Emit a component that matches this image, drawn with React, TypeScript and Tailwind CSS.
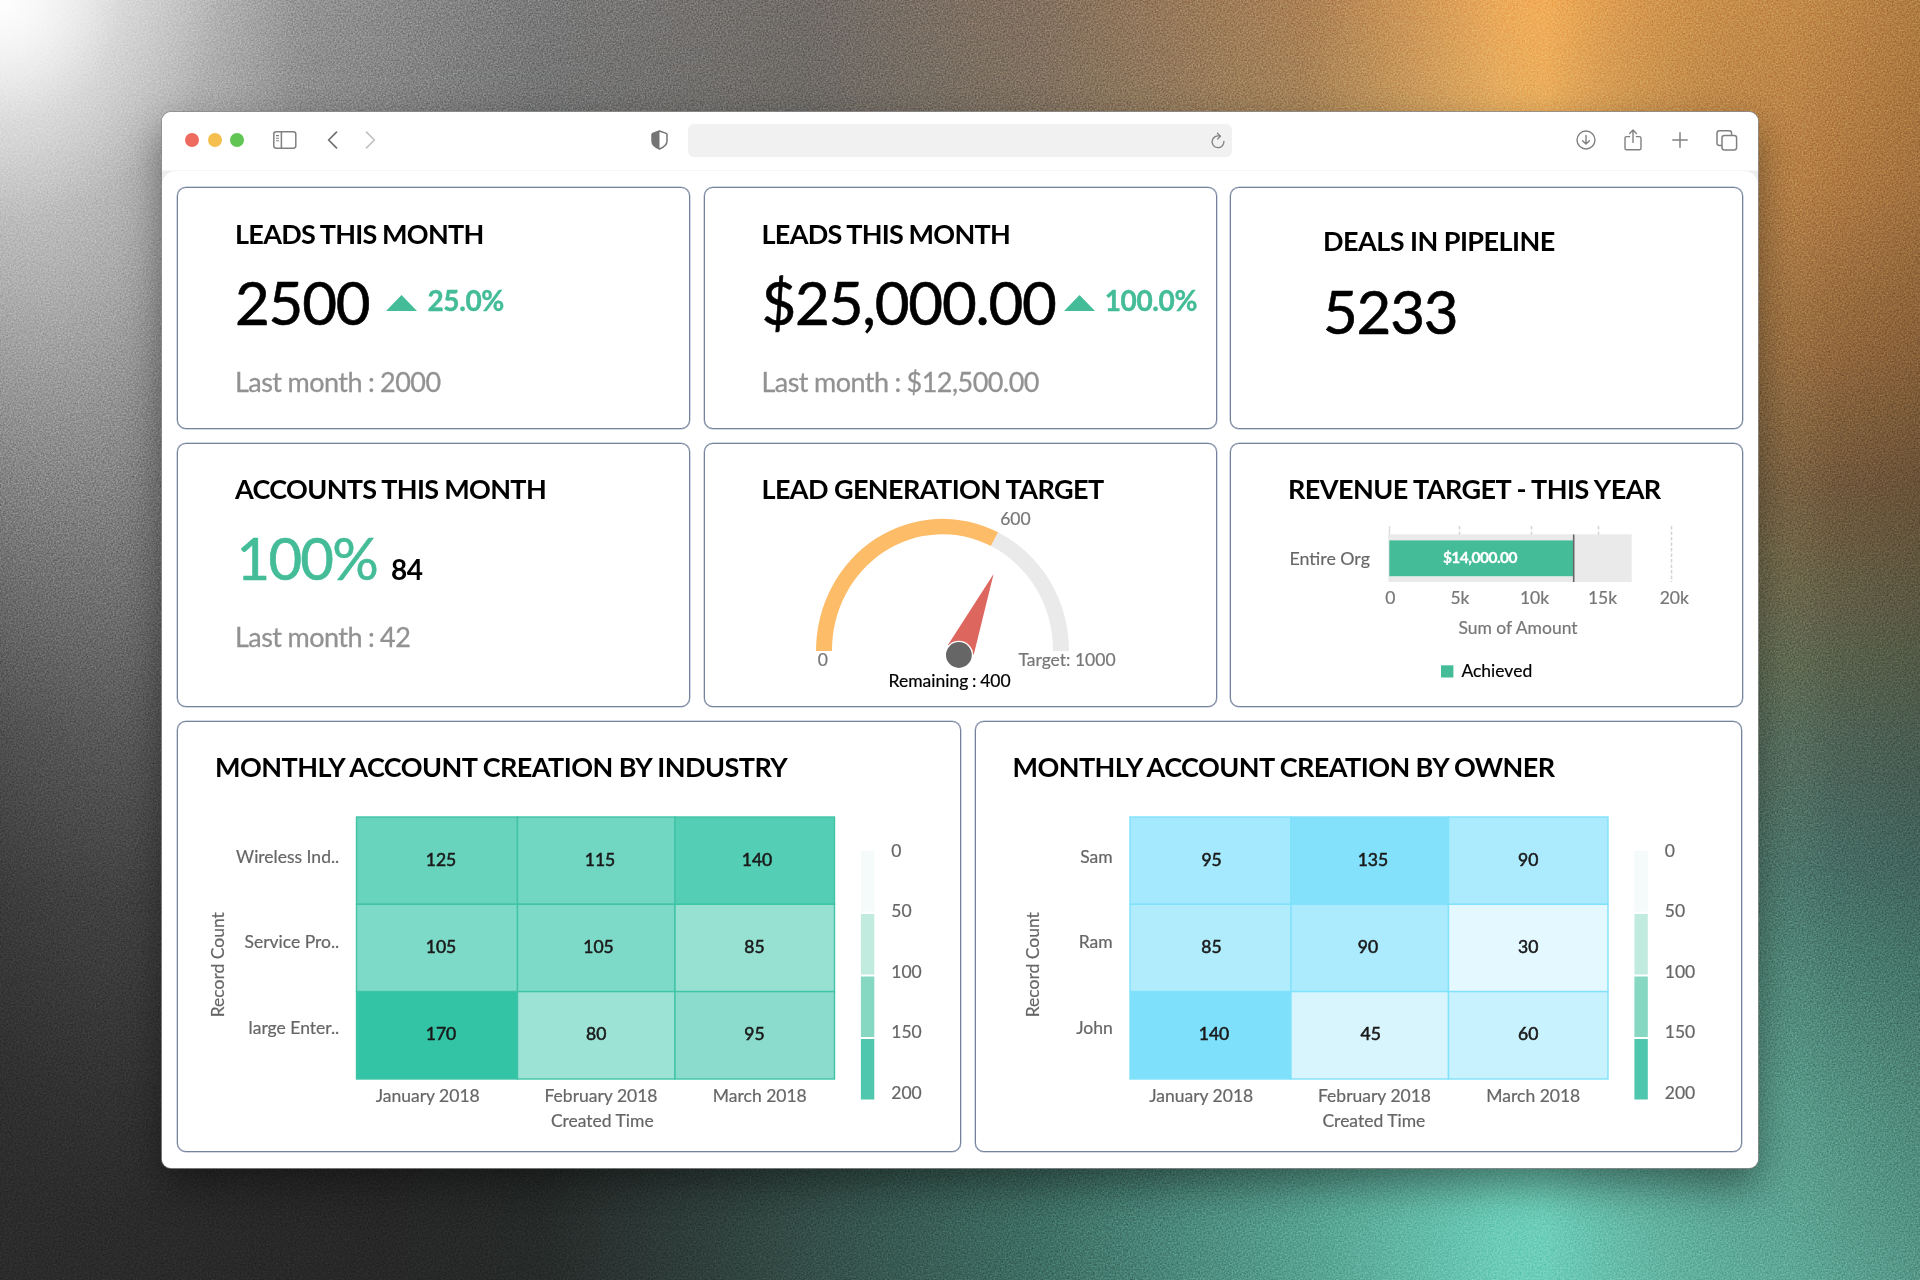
import type {ReactNode} from "react";

interface KpiProps {
    title: string;
    value: string;
    delta?: string;
    lastMonth?: string;
}

interface HeatmapProps {
    rows: string[];
    cells: { value: number; color: string; x: number }[][];
    line: string;
    left: number;
    axisX: number;
    timeX: number;
}

const GREEN = "#43bc97";

// column and row edges, measured from the top left corner of the grid
const COLS = [0, 161, 318.5, 478];
const ROWS = [0, 87.3, 174.6, 262];

const LEGEND = [
    {y: 34, color: "#f5fafa"},
    {y: 97, color: "#c2ebe0"},
    {y: 159.5, color: "#86d8c3"},
    {y: 222, color: "#4fc7ae"},
];

const industryCells = [
    [
        {value: 125, color: "#68d4bd", x: 84.5},
        {value: 115, color: "#72d7c2", x: 243.5},
        {value: 140, color: "#54ceb4", x: 400.5},
    ],
    [
        {value: 105, color: "#7edac8", x: 84.5},
        {value: 105, color: "#7edac8", x: 242},
        {value: 85, color: "#97e1d2", x: 398},
    ],
    [
        {value: 170, color: "#33c4a6", x: 84.5},
        {value: 80, color: "#9de3d5", x: 239.7},
        {value: 95, color: "#8bdccc", x: 398},
    ],
];

const ownerCells = [
    [
        {value: 95, color: "#a5e9fe", x: 81.6},
        {value: 135, color: "#84e1fc", x: 242.9},
        {value: 90, color: "#acebfe", x: 398.2},
    ],
    [
        {value: 85, color: "#b1ecfd", x: 81.4},
        {value: 90, color: "#acebfe", x: 237.9},
        {value: 30, color: "#e4f8ff", x: 398.2},
    ],
    [
        {value: 140, color: "#7fe0fc", x: 84},
        {value: 45, color: "#d8f5fd", x: 240.7},
        {value: 60, color: "#c8f2fe", x: 398.2},
    ],
];

const Card = ({className, children}: { className: string; children: ReactNode }) => (
    <section
        className={`flex flex-col rounded-[9px] border border-[#74829d] bg-white shadow-[0_0_0_0.5px_#a9b2c4] ${className}`}>
        {children}
    </section>
);

const Title = ({children, className = "tracking-[-0.02em]"}: { children: ReactNode; className?: string }) => (
    <h2 className={`text-[27px] leading-8 font-bold whitespace-nowrap text-black ${className}`}>
        {children}
    </h2>
);

const LastMonth = ({children}: { children: ReactNode }) => (
    <p className="mt-[34px] text-[27px] leading-8 tracking-[-0.02em] text-[#929292] [-webkit-text-stroke:0.3px] [word-spacing:-0.4px]">
        {children}
    </p>
);

const Kpi = ({title, value, delta, lastMonth}: KpiProps) => (
    <Card className="pt-[30px] pl-[57px]">
        <Title className="tracking-[-0.026em] [word-spacing:-0.5px]">{title}</Title>
        <div className="mt-[22px] flex h-[60px] whitespace-nowrap">
            <span
                className="text-[60px] leading-[60px] tracking-[-0.02em] text-black [-webkit-text-stroke:0.6px]">{value}</span>
            {delta && (
                <div className={`flex items-start ${value.length > 5 ? "ml-[8px]" : "ml-[17px]"}`}>
                    <svg width="31" height="16" viewBox="0 0 31 16" className="mt-[23px]">
                        <path d="M15.5 0 31 16H0Z" fill={GREEN}/>
                    </svg>
                    <span
                        className="mt-[12px] ml-[10px] text-[28px] leading-8 font-bold tracking-[-0.013em] text-[#43bc97] [-webkit-text-stroke:0.4px]">
                        {delta}
                    </span>
                </div>
            )}
        </div>
        <LastMonth>{lastMonth}</LastMonth>
    </Card>
);

const Gauge = () => (
    <svg width="511" height="200" viewBox="705 502 511 200" fontSize="17.5">
        <path d="M816 651A126.5 132 0 0 1 998.2 532.3L991 546A110.5 116 0 0 0 832 651Z" fill="#fdbc68"/>
        <path d="M998.2 532.3A126.5 132 0 0 1 1069 651H1053A110.5 116 0 0 0 991 546Z" fill="#eaeaea"/>
        <path d="M993.6 574 947.9 645 973.8 654.5Z" fill="#dd665f"/>
        <circle cx="958.9" cy="655" r="13.6" fill="#666" stroke="#fff" strokeWidth="1.4"/>
        <g fill="#777" stroke="#777" strokeWidth="0.2" textAnchor="middle">
            <text x="1015.4" y="524.7">600</text>
            <text x="822.9" y="666.3">0</text>
            <text x="1067" y="666.3">Target: 1000</text>
            <text x="949.6" y="687" fill="#000" stroke="#000" wordSpacing="-0.7">Remaining : 400</text>
        </g>
    </svg>
);

const Bullet = () => (
    <svg width="511" height="200" viewBox="1231 502 511 200" fontSize="17.5">
        <path d="M1389.5 526v10" stroke="#dcdcdc" strokeWidth="1.5"/>
        <path d="M1459.5 526v10M1531.5 526v10M1598.5 526v10M1671.5 526v56" stroke="#d4d4d4" strokeWidth="1.5"
              strokeDasharray="3.5 2"/>
        <rect x="1388.3" y="534.3" width="243.4" height="47.7" fill="#eaeaea"/>
        <rect x="1389.3" y="540.4" width="184" height="35.8" fill={GREEN}/>
        <path d="M1573.7 534.5V582" stroke="#666" strokeWidth="1.6"/>
        <text x="1480" y="563" fill="#fff" stroke="#fff" strokeWidth="0.3" fontSize="15.5" fontWeight="700"
              textAnchor="middle" letterSpacing="-0.5">$14,000.00
        </text>
        <g fill="#777" stroke="#777" strokeWidth="0.2" textAnchor="middle">
            <text x="1329.7" y="565" fill="#666" fontSize="17.8">Entire Org</text>
            <text x="1390.4" y="603.7">0</text>
            <text x="1460" y="603.7">5k</text>
            <text x="1534.5" y="603.7">10k</text>
            <text x="1602.5" y="603.7">15k</text>
            <text x="1674.3" y="603.7">20k</text>
            <text x="1518" y="634">Sum of Amount</text>
            <text x="1496.8" y="677" fill="#000" stroke="#000">Achieved</text>
        </g>
        <rect x="1441" y="665.3" width="12.4" height="12.2" fill={GREEN}/>
    </svg>
);

const Heatmap = ({rows, cells, line, left, axisX, timeX}: HeatmapProps) => (
    <svg width="750" height="330" viewBox={`${-left} -8 750 330`} fontSize="17.5">
        {cells.map((row, r) => row.map((cell, c) => (
            <g key={`${r}-${c}`}>
                <rect x={COLS[c]} y={ROWS[r]} width={COLS[c + 1] - COLS[c]} height={ROWS[r + 1] - ROWS[r]}
                      fill={cell.color} stroke={line} strokeWidth="1.4"/>
                <text x={cell.x} y={ROWS[r] + 48.5} textAnchor="middle" fill="#1a1a1a" stroke="#1a1a1a"
                      strokeWidth="0.55">{cell.value}</text>
            </g>
        )))}
        <g fill="#666" stroke="#666" strokeWidth="0.2">
            {rows.map((label, i) => (
                <text key={label} x="-17.3" y={46 + i * 85.4} textAnchor="end">{label}</text>
            ))}
            <text transform={`translate(${axisX} 147.7) rotate(-90)`} textAnchor="middle">Record Count</text>
            <text x="71.2" y="284.5" textAnchor="middle">January 2018</text>
            <text x="244.5" y="284.5" textAnchor="middle">February 2018</text>
            <text x="403.3" y="284.5" textAnchor="middle">March 2018</text>
            <text x={timeX} y="309.5" textAnchor="middle">Created Time</text>
            {[0, 50, 100, 150, 200].map((n, i) => (
                <text key={n} x="534.8" y={39.5 + i * 60.6}>{n}</text>
            ))}
        </g>
        {LEGEND.map(item => (
            <rect key={item.y} x="504.4" y={item.y} width="13.4" height="60.5" fill={item.color}/>
        ))}
    </svg>
);

const Toolbar = () => (
    <header className="flex h-[59px] items-center border-b border-[#f6f6f6] bg-white pr-[20px] pb-[2px] pl-[23px]">
        <div className="flex gap-[8.7px]">
            <span className="size-[14px] rounded-full bg-[#ed6a5e]"/>
            <span className="size-[14px] rounded-full bg-[#f5bf4f]"/>
            <span className="size-[14px] rounded-full bg-[#61c554]"/>
        </div>
        {/* sidebar */}
        <svg width="24" height="18" viewBox="0 0 24 18" fill="none" stroke="#808080" strokeWidth="1.5"
             className="ml-[29px]">
            <rect x="0.8" y="0.8" width="22" height="16.4" rx="2.4"/>
            <path d="M8.4 1v16"/>
            <path d="M3 4.6h3M3 7.2h3M3 9.8h3" strokeWidth="1.1"/>
        </svg>
        <svg width="11" height="18" viewBox="0 0 11 18" fill="none" stroke="#707070" strokeWidth="1.7"
             strokeLinecap="round" strokeLinejoin="round" className="ml-[30px]">
            <path d="M9.5 1.2 1.6 9l7.9 7.8"/>
        </svg>
        <svg width="11" height="18" viewBox="0 0 11 18" fill="none" stroke="#c2c2c2" strokeWidth="1.7"
             strokeLinecap="round" strokeLinejoin="round" className="ml-[27px]">
            <path d="M1.5 1.2 9.4 9l-7.9 7.8"/>
        </svg>
        {/* privacy shield */}
        <svg width="17" height="20" viewBox="0 0 17 20" className="ml-[275px]">
            <path d="M8.5 1 15.2 3.4Q16 3.7 16 4.6V11Q16 15.8 8.5 19Q1 15.8 1 11V4.6Q1 3.7 1.8 3.4Z" fill="none"
                  stroke="#747474" strokeWidth="1.5" strokeLinejoin="round"/>
            <path d="M8.5 1V19Q1 15.8 1 11V4.6Q1 3.7 1.8 3.4Z" fill="#747474"/>
        </svg>
        <div className="ml-[20px] flex h-[33px] w-[544px] items-center justify-end rounded-[6px] bg-[#f1f1f1] pr-[7px]">
            <svg width="14" height="17" viewBox="0 0 14 17" fill="none" stroke="#808080" strokeWidth="1.3"
                 strokeLinecap="round" strokeLinejoin="round">
                <path d="M12.9 9.4A5.9 5.9 0 1 1 9 4.2"/>
                <path d="M6.4 1.2 9.4 4.2 6.6 7.1"/>
            </svg>
        </div>
        <div className="ml-auto flex items-center">
            <svg width="20" height="20" viewBox="0 0 20 20" fill="none" stroke="#808080" strokeWidth="1.4"
                 strokeLinecap="round" strokeLinejoin="round">
                <circle cx="10" cy="10" r="9"/>
                <path d="M10 5.4v8.6M6.6 10.8 10 14.1l3.4-3.3"/>
            </svg>
            <svg width="18" height="22" viewBox="0 0 18 22" fill="none" stroke="#808080" strokeWidth="1.4"
                 strokeLinecap="round" strokeLinejoin="round" className="ml-[28px] -mt-px">
                <path d="M5.6 7.6H2.6Q1 7.6 1 9.2V19.2Q1 20.8 2.6 20.8H15.4Q17 20.8 17 19.2V9.2Q17 7.6 15.4 7.6H12.4"/>
                <path d="M9 13.4V1.2M5.6 4.4 9 1.1l3.4 3.3"/>
            </svg>
            <svg width="16" height="16" viewBox="0 0 16 16" stroke="#808080" strokeWidth="1.5" strokeLinecap="round"
                 className="ml-[30px]">
                <path d="M8 .8v14.4M.8 8h14.4"/>
            </svg>
            <svg width="22" height="21" viewBox="0 0 22 21" fill="none" stroke="#808080" strokeWidth="1.5"
                 className="ml-[28px]">
                <rect x="6" y="5.4" width="14.6" height="14.6" rx="2.4"/>
                <path d="M6 15.4H3.4Q1 15.4 1 13V3.2Q1 .8 3.4 .8H13.2Q15.6 .8 15.6 3.2V5.4"/>
            </svg>
        </div>
    </header>
);

const Wallpaper = () => (
    <>
        <div
            className="absolute inset-0 bg-[linear-gradient(90deg,#2c2c2c_0%,#272727_20%,#262a29_28%,#30423e_38%,#3e6e63_54%,#58a594_69%,#70d6c1_80.5%,#64b9a8_90%,#579f8f_100%)]"/>
        <div
            className="absolute inset-0 bg-[linear-gradient(90deg,#e4e4e4_0%,#c0c0c0_6%,#949494_16%,#7a7a7a_28%,#716c68_42%,#83705f_54%,#ab8054_68%,#fcb35a_80.5%,#cd924d_91%,#ad7a46_100%)] [mask-image:linear-gradient(180deg,#000_0%,rgba(0,0,0,0.82)_22%,rgba(0,0,0,0.5)_48%,rgba(0,0,0,0.2)_70%,transparent_95%)]"/>
        {/* side bands */}
        <div
            className="absolute inset-y-0 left-0 w-[420px] bg-[linear-gradient(180deg,#e0e0e0_0%,#cdcdcd_10%,#b2b2b2_20%,#8e8e8e_32%,#6c6c6c_44%,#4c4c4c_57%,#393939_70%,#2e2e2e_85%,#2b2b2b_100%)] [mask-image:linear-gradient(90deg,rgba(0,0,0,0.9)_0%,rgba(0,0,0,0.4)_30%,transparent_70%)]"/>
        <div
            className="absolute top-0 left-0 size-[220px] bg-[radial-gradient(circle_220px_at_0_0,#fff_0%,rgba(255,255,255,0.75)_20%,rgba(255,255,255,0.25)_55%,rgba(255,255,255,0)_100%)]"/>
        <div
            className="absolute inset-y-0 right-0 w-[420px] bg-[linear-gradient(180deg,#c38a49_0%,#b57e45_14%,#94693e_28%,#745a3d_38%,#666047_46%,#586450_53%,#4d675d_61%,#487067_68%,#4d8375_76%,#589887_87%,#5ea896_100%)] [mask-image:linear-gradient(90deg,transparent_0%,rgba(0,0,0,0.7)_50%,#000_80%)]"/>
        <div
            className="absolute inset-y-0 right-0 w-[160px] bg-[linear-gradient(90deg,transparent_20%,rgba(0,0,0,0.1)_100%)]"/>
        <svg className="absolute inset-0 size-full opacity-35 mix-blend-overlay">
            <filter id="grain" colorInterpolationFilters="sRGB">
                <feTurbulence type="fractalNoise" baseFrequency="0.6" numOctaves="3" stitchTiles="stitch"/>
                <feColorMatrix values="1 0 0 0 0 1 0 0 0 0 1 0 0 0 0 0 0 0 0 1"/>
            </filter>
            <rect width="100%" height="100%" filter="url(#grain)"/>
        </svg>
    </>
);

export default function App() {
    return (
        <div
            className="relative h-[1280px] w-[1920px] overflow-hidden pt-[112px] pl-[162px] font-[Lato,'Noto_Sans',sans-serif]">
            <Wallpaper/>
            <main
                className="relative h-[1056px] w-[1596px] overflow-hidden rounded-[9px] bg-[#eee] shadow-[0_0_0_1px_rgba(140,140,140,0.8),0_18px_38px_rgba(0,0,0,0.42)]">
                <Toolbar/>
                <div
                    className="flex h-[997px] flex-col gap-[13.5px] rounded-t-[14px] bg-white pt-[16px] pl-[15px]">
                    <div className="grid h-[242px] grid-cols-[513px_513px_513px] gap-[13.5px]">
                        <Kpi title="LEADS THIS MONTH" value="2500" delta="25.0%" lastMonth="Last month : 2000"/>
                        <Kpi title="LEADS THIS MONTH" value="$25,000.00" delta="100.0%"
                             lastMonth="Last month : $12,500.00"/>
                        <Card className="pt-[37px] pl-[92px]">
                            <Title>DEALS IN PIPELINE</Title>
                            <p className="mt-[24px] text-[60px] leading-[60px] tracking-[-0.02em] text-black [-webkit-text-stroke:0.6px]">
                                5233
                            </p>
                        </Card>
                    </div>

                    <div className="grid h-[264.5px] grid-cols-[513px_513px_513px] gap-[13.5px]">
                        <Card className="pt-[29px] pl-[57px]">
                            <Title className="tracking-[-0.024em] [word-spacing:-0.3px]">ACCOUNTS THIS MONTH</Title>
                            <div className="mt-[23px] flex h-[59px] items-baseline text-[58px] leading-[60px]">
                                <span
                                    className="ml-[1.5px] tracking-[-0.03em] text-[#43bc97] [-webkit-text-stroke:0.6px]">100%</span>
                                <span
                                    className="ml-[14px] text-[28px] font-bold tracking-[-0.02em] text-black">84</span>
                            </div>
                            <LastMonth>Last month : 42</LastMonth>
                        </Card>
                        <Card className="pt-[29px]">
                            <div className="-mb-[3px] pl-[57px]">
                                <Title className="tracking-[-0.022em]">LEAD GENERATION TARGET</Title>
                            </div>
                            <Gauge/>
                        </Card>
                        <Card className="pt-[29px]">
                            <div className="-mb-[3px] pl-[57px]"><Title>REVENUE TARGET - THIS YEAR</Title></div>
                            <Bullet/>
                        </Card>
                    </div>

                    <div className="flex h-[431.5px] gap-[13.5px]">
                        <Card className="w-[784px] pt-[29px]">
                            <div className="pl-[37px]"><Title>MONTHLY ACCOUNT CREATION BY INDUSTRY</Title></div>
                            <div className="mt-[26px]">
                                <Heatmap rows={["Wireless Ind..", "Service Pro..", "large Enter.."]}
                                         cells={industryCells} line="#3fc4a6" left={178.5} axisX={-132.2}
                                         timeX={245.8}/>
                            </div>
                        </Card>
                        <Card className="w-[767.5px] pt-[29px]">
                            <div className="pl-[37px]">
                                <Title className="tracking-[-0.021em]">MONTHLY ACCOUNT CREATION BY OWNER</Title>
                            </div>
                            <div className="mt-[26px]">
                                <Heatmap rows={["Sam", "Ram", "John"]} cells={ownerCells} line="#80e2fb"
                                         left={154} axisX={-90.6} timeX={243.9}/>
                            </div>
                        </Card>
                    </div>
                </div>
            </main>
        </div>
    );
}
